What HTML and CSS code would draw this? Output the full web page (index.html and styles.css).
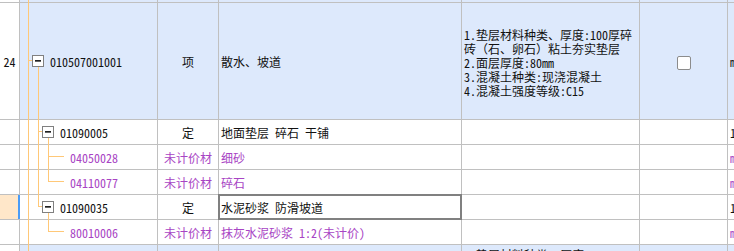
FILE: index.html
```html
<!DOCTYPE html>
<html lang="zh-CN">
<head>
<meta charset="utf-8">
<title>清单</title>
<link rel="stylesheet" href="styles.css">
</head>
<body>
<div class="sheet">
  <div class="grid">
    <!-- partial row above -->
    <div class="c"></div><div class="c blue"></div><div class="c blue"></div><div class="c blue"></div><div class="c blue"></div><div class="c blue"></div><div class="c blue"></div>

    <!-- row 24 -->
    <div class="c num">24</div>
    <div class="c code blue lv1"><span class="tog"></span><span>010507001001</span></div>
    <div class="c type blue">项</div>
    <div class="c name blue">散水、坡道</div>
    <div class="c desc blue"><div class="lines">1.垫层材料种类、厚度:100厚碎<br>砖（石、卵石）粘土夯实垫层<br>2.面层厚度:80mm<br>3.混凝土种类:现浇混凝土<br>4.混凝土强度等级:C15</div></div>
    <div class="c chk blue"><span class="box"></span></div>
    <div class="c unit blue">m2</div>

    <!-- 01090005 -->
    <div class="c num"></div>
    <div class="c code lv2"><span class="tog"></span><span>01090005</span></div>
    <div class="c type">定</div>
    <div class="c name">地面垫层 碎石 干铺</div>
    <div class="c desc"></div>
    <div class="c chk"></div>
    <div class="c unit">10m3</div>

    <!-- 04050028 -->
    <div class="c num"></div>
    <div class="c code leaf purple"><span>04050028</span></div>
    <div class="c type purple">未计价材</div>
    <div class="c name purple">细砂</div>
    <div class="c desc"></div>
    <div class="c chk"></div>
    <div class="c unit purple">m3</div>

    <!-- 04110077 -->
    <div class="c num"></div>
    <div class="c code leaf purple"><span>04110077</span></div>
    <div class="c type purple">未计价材</div>
    <div class="c name purple">碎石</div>
    <div class="c desc"></div>
    <div class="c chk"></div>
    <div class="c unit purple">m3</div>

    <!-- 01090035 (selected) -->
    <div class="c num current"></div>
    <div class="c code lv2"><span class="tog"></span><span>01090035</span></div>
    <div class="c type">定</div>
    <div class="c name selected">水泥砂浆 防滑坡道</div>
    <div class="c desc"></div>
    <div class="c chk"></div>
    <div class="c unit">100m2</div>

    <!-- 80010006 -->
    <div class="c num"></div>
    <div class="c code leaf purple"><span>80010006</span></div>
    <div class="c type purple">未计价材</div>
    <div class="c name purple">抹灰水泥砂浆 1:2(未计价)</div>
    <div class="c desc"></div>
    <div class="c chk"></div>
    <div class="c unit purple">m3</div>

    <!-- next row (partial) -->
    <div class="c"></div>
    <div class="c blue"></div>
    <div class="c blue"></div>
    <div class="c blue"></div>
    <div class="c desc blue next">1.垫层材料种类、厚度:</div>
    <div class="c blue"></div>
    <div class="c blue"></div>
  </div>

  <svg class="tree" width="734" height="251" viewBox="0 0 734 251" aria-hidden="true">
    <g stroke="#ffc878" stroke-width="1" fill="none" shape-rendering="crispEdges">
      <line x1="28.5" y1="0" x2="28.5" y2="251"/>
      <line x1="28" y1="60.5" x2="32" y2="60.5"/>
      <line x1="38.5" y1="67" x2="38.5" y2="207"/>
      <line x1="38" y1="131.5" x2="42" y2="131.5"/>
      <line x1="38" y1="206.5" x2="42" y2="206.5"/>
      <line x1="48.5" y1="138" x2="48.5" y2="182"/>
      <line x1="48" y1="156.5" x2="64" y2="156.5"/>
      <line x1="48" y1="181.5" x2="64" y2="181.5"/>
      <line x1="48.5" y1="213" x2="48.5" y2="232"/>
      <line x1="48" y1="231.5" x2="64" y2="231.5"/>
    </g>
  </svg>
</div>
</body>
</html>
```

FILE: styles.css
```css
html, body {
  margin: 0;
  padding: 0;
  background: #ffffff;
}

.sheet {
  position: relative;
  width: 734px;
  height: 251px;
  overflow: hidden;
}

.grid {
  display: grid;
  grid-template-columns: 19px 137px 60px 242px 177px 87px 60px;
  grid-template-rows: 2px 116px 24px 24px 24px 24px 24px 60px;
  gap: 1px;
  background: #c0c0c0;
  width: 810px;
  font-family: "Noto Sans Mono CJK SC", "Noto Sans CJK SC", "Liberation Mono", monospace;
  font-size: 12px;
  color: #111111;
}

.c {
  background: #ffffff;
  display: flex;
  align-items: center;
  white-space: nowrap;
  overflow: hidden;
  min-width: 0;
  min-height: 0;
  line-height: 14px;
}

.blue {
  background: #dde9fc;
}

.purple {
  color: #a844c4;
}

.num {
  justify-content: center;
  padding-top: 2px;
}

.num.current {
  background: #ffe7c9;
  box-shadow: inset -1px 0 0 #4a9cf7, 1px 0 0 #4a9cf7;
}

.code {
  padding-top: 1px;
}

.code.lv1 {
  padding-left: 12px;
}

.code.lv2 {
  padding-left: 22px;
}

.code.leaf {
  padding-left: 50px;
}

.tog {
  position: relative;
  flex: none;
  width: 10px;
  height: 10px;
  border: 1px solid #808080;
  background: #ffffff;
  margin-right: 6px;
  margin-top: -1px;
}

.tog::after {
  content: "";
  position: absolute;
  left: 2px;
  top: 4px;
  width: 6px;
  height: 1px;
  background: #222222;
  box-shadow: 0 1px 0 #666666;
}

.type {
  justify-content: center;
  padding-top: 1px;
}

.name {
  padding-left: 2px;
  padding-top: 1px;
}

.name.selected {
  outline: 2px solid #808080;
  outline-offset: -1px;
}

.desc {
  padding-left: 2px;
}

.lines {
  line-height: 14px;
  padding-top: 3px;
}

.desc.next {
  align-items: flex-start;
  padding-top: 3px;
}

.chk {
  justify-content: center;
}

.chk .box {
  width: 12px;
  height: 12px;
  border: 1px solid #8c8c8c;
  border-radius: 2px;
  background: #ffffff;
  margin-top: 3px;
}

.unit {
  padding-left: 2px;
  padding-top: 1px;
}

.tree {
  position: absolute;
  left: 0;
  top: 0;
  pointer-events: none;
}
```
